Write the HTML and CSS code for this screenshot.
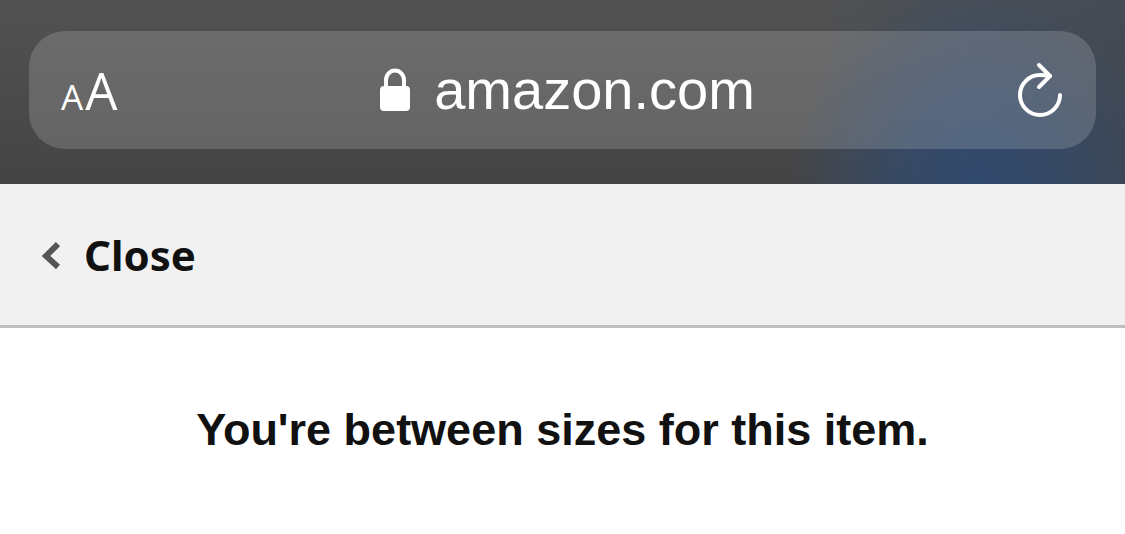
FILE: index.html
```html
<!DOCTYPE html>
<html lang="en">
<head>
    <meta charset="utf-8">
    <title>amazon.com</title>
    <link rel="stylesheet" href="styles.css">
</head>
<body>
    <header class="browser">
        <div class="address-bar">
            <button class="text-size" type="button"><span class="small">A</span><span class="large">A</span></button>
            <button class="address" type="button">
                <svg class="lock" width="30" height="44" viewBox="0 0 30 44" aria-hidden="true">
                    <path d="M6 21V12a9 9.5 0 0 1 18 0v9" fill="none" stroke="#fff" stroke-width="4"/>
                    <rect x="0" y="18" width="30" height="25" rx="4" fill="#fff"/>
                </svg>
                <span>amazon.com</span>
            </button>
            <button class="reload" type="button" aria-label="Reload">
                <svg width="48" height="56" viewBox="0 0 48 56" fill="none" stroke="#fff" stroke-width="4" stroke-linecap="round" stroke-linejoin="round">
                    <path d="M44 33A20 20 0 1 1 24 13q5 0 10 1"/>
                    <path d="M23 3l11 11-11 11"/>
                </svg>
            </button>
        </div>
    </header>

    <nav class="close-bar">
        <button class="close" type="button">
            <svg width="20" height="28" viewBox="0 0 20 28" aria-hidden="true">
                <path d="M18 3L6 15l12 11" fill="none" stroke="#555" stroke-width="6"/>
            </svg>
            <span>Close</span>
        </button>
    </nav>

    <main class="message">
        <h1>You're between sizes for this item.</h1>
    </main>
</body>
</html>
```

FILE: styles.css
```css
* {
    box-sizing: border-box;
}

body {
    margin: 0;
    background: #fff;
    color: #111;
    font-family: "Liberation Sans", Arial, sans-serif;
}

button {
    margin: 0;
    padding: 0;
    border: 0;
    background: none;
    color: inherit;
    cursor: pointer;
}

svg {
    display: block;
}

.browser {
    padding: 31px 29px 35px;
    background:
        radial-gradient(ellipse 190px 200px at 87% 100%, rgba(48, 74, 112, 0.95) 0%, rgba(48, 74, 112, 0.6) 45%, rgba(48, 74, 112, 0) 100%),
        linear-gradient(90deg, rgba(64, 76, 92, 0) 72%, rgba(64, 76, 92, 0.5) 85%, rgba(60, 70, 84, 0.6) 100%),
        linear-gradient(#525252, #444445);
}

.address-bar {
    display: grid;
    grid-template-columns: 80px 1fr 70px;
    align-items: center;
    height: 118px;
    padding: 0 32px;
    border-radius: 36px;
    background: rgba(255, 255, 255, 0.16);
    color: #fff;
}

.text-size {
    display: flex;
    align-items: baseline;
    gap: 2px;
    padding-top: 6px;
    font-family: "Open Sans", sans-serif;
    line-height: 60px;
}

.small {
    font-size: 35px;
    font-weight: 500;
}

.large {
    font-size: 51px;
    font-weight: 500;
}

.address {
    display: flex;
    align-items: center;
    justify-content: center;
    gap: 24px;
    font-family: "Liberation Sans", Arial, sans-serif;
    font-size: 56px;
    line-height: 70px;
}

.reload {
    justify-self: end;
}

.close-bar {
    padding: 40px;
    border-bottom: 3px solid #bfbfbf;
    background: #f1f1f1;
}

.close {
    display: flex;
    align-items: center;
    gap: 24px;
    font-family: "Noto Sans", sans-serif;
    font-size: 42px;
    font-weight: 700;
    line-height: 61px;
}

.message {
    padding: 76px 40px;
    text-align: center;
}

.message h1 {
    margin: 0;
    font-size: 45px;
    line-height: 52px;
}
```
